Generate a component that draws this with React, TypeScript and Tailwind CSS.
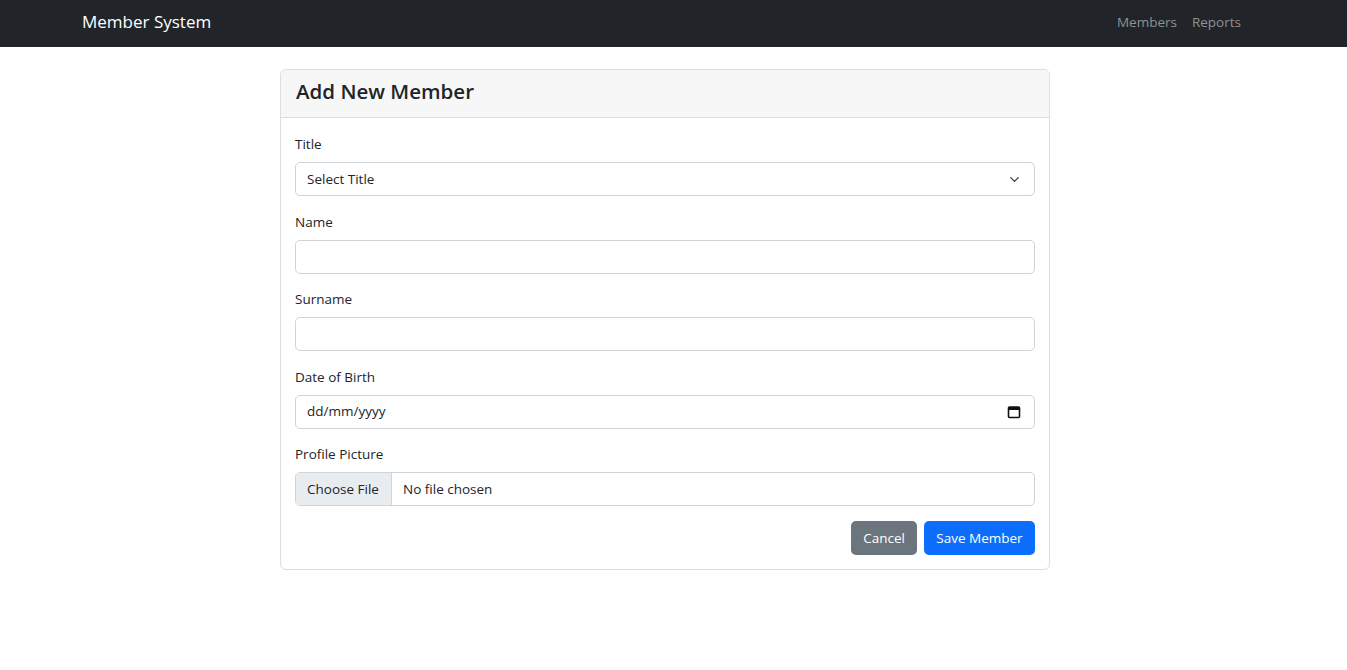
import { ChevronDown } from 'lucide-react';

const font = { fontFamily: '"Segoe UI", "Open Sans", "Noto Sans", sans-serif' };

function Label({ children }: { children: React.ReactNode }) {
    return <label className="mb-[7px] block text-[13.5px] leading-[21px] text-[#212529]">{children}</label>;
}

function CalendarIcon() {
    return (
        <svg width="14" height="14" viewBox="0 0 14 14" fill="none">
            <rect x="1.5" y="2" width="11" height="10.5" rx="1" stroke="#111" strokeWidth="1.6" />
            <rect x="1.5" y="2" width="11" height="3" fill="#111" />
        </svg>
    );
}

export default function App() {
    return (
        <div className="min-h-[670px] bg-white text-[#212529]" style={font}>
            <nav className="flex h-[47px] items-center justify-between bg-[#212529] pb-[3px] pl-[82px] pr-[106px]">
                <span className="text-[17px] text-white">Member System</span>
                <div className="flex gap-[15px] text-[13.5px] text-[#8f9194]">
                    <span>Members</span>
                    <span>Reports</span>
                </div>
            </nav>

            <div className="pl-[280px] pt-[22px]">
                <div className="w-[770px] rounded-[6px] border border-[#dedede]">
                    <div className="flex h-[48px] items-center rounded-t-[6px] border-b border-[#dedede] bg-[#f7f7f7] px-[15px] pb-[4px]">
                        <h4 className="text-[20.5px] font-semibold text-[#212529]">Add New Member</h4>
                    </div>
                    <div className="px-[14px] pt-[16px] pb-[14px]">
                        <div className="mb-[15.5px]">
                            <Label>Title</Label>
                            <div className="flex h-[34px] items-center justify-between rounded-[5px] border border-[#ced4da] pl-[11px] pr-[12px] text-[13.5px]">
                                <span>Select Title</span>
                                <ChevronDown size={15} strokeWidth={2} className="text-[#343a40]" />
                            </div>
                        </div>

                        <div className="mb-[15.5px]">
                            <Label>Name</Label>
                            <input type="text" className="block h-[34px] w-full rounded-[5px] border border-[#ced4da] px-[11px] text-[14px] outline-none" />
                        </div>

                        <div className="mb-[15.5px]">
                            <Label>Surname</Label>
                            <input type="text" className="block h-[34px] w-full rounded-[5px] border border-[#ced4da] px-[11px] text-[14px] outline-none" />
                        </div>

                        <div className="mb-[15.5px]">
                            <Label>Date of Birth</Label>
                            <div className="flex h-[34px] items-center justify-between rounded-[5px] border border-[#ced4da] pl-[11px] pr-[13px] text-[13.5px]">
                                <span>dd/mm/yyyy</span>
                                <CalendarIcon />
                            </div>
                        </div>

                        <div className="mb-[15px]">
                            <Label>Profile Picture</Label>
                            <div className="flex h-[34px] items-stretch overflow-hidden rounded-[5px] border border-[#ced4da] text-[13.5px]">
                                <span className="flex w-[96px] items-center border-r border-[#ced4da] bg-[#e9ecef] px-[11px]">Choose File</span>
                                <span className="flex items-center pl-[11px]">No file chosen</span>
                            </div>
                        </div>

                        <div className="flex justify-end gap-[7px]">
                            <button className="h-[34px] w-[66px] rounded-[5px] bg-[#6c757d] text-[13.5px] text-white">Cancel</button>
                            <button className="h-[34px] w-[111px] rounded-[5px] bg-[#0d6efd] text-[13.5px] text-white">Save Member</button>
                        </div>
                    </div>
                </div>
            </div>
        </div>
    );
}
